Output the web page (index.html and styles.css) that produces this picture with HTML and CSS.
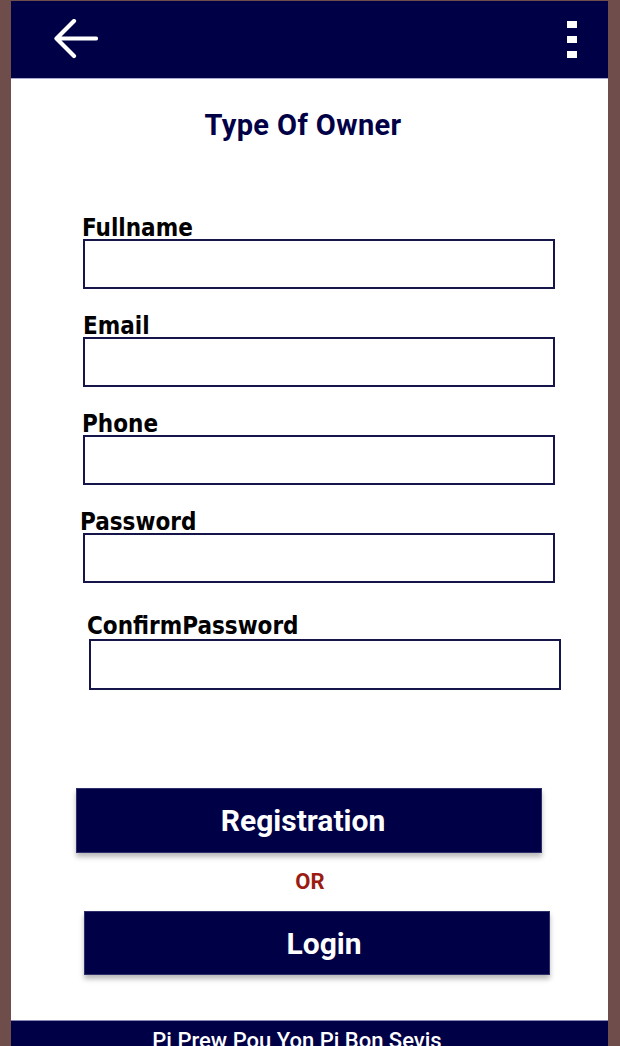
FILE: index.html
```html
<!DOCTYPE html>
<html>
<head>
<meta charset="utf-8">
<link rel="stylesheet" href="styles.css">
</head>
<body>
<div class="frame">
  <header class="topbar">
    <svg class="back" width="44" height="40" viewBox="0 0 44 40">
      <path d="M3 19.5 H42 M20 2 L2.5 19.5 L20 37" fill="none" stroke="#fff" stroke-width="4.2" stroke-linecap="round" stroke-linejoin="round"/>
    </svg>
    <div class="menu"><span></span><span></span><span></span></div>
  </header>
  <main class="content">
    <h1 class="title">Type Of Owner</h1>
    <form class="form">
      <div class="field">
        <label class="label">Fullname</label>
        <input class="input" type="text">
      </div>
      <div class="field">
        <label class="label label-email">Email</label>
        <input class="input" type="text">
      </div>
      <div class="field">
        <label class="label">Phone</label>
        <input class="input" type="text">
      </div>
      <div class="field">
        <label class="label label-pass">Password</label>
        <input class="input" type="password">
      </div>
      <div class="field field-confirm">
        <label class="label label-confirm">ConfirmPassword</label>
        <input class="input input-confirm" type="password">
      </div>
    </form>
    <div class="actions">
      <button class="btn btn-reg" type="button">Registration</button>
      <div class="or">OR</div>
      <button class="btn btn-login" type="button">Login</button>
    </div>
  </main>
  <footer class="footer">Pi Prew Pou Yon Pi Bon Sevis</footer>
</div>
</body>
</html>
```
FILE: styles.css
```css
html, body {
  margin: 0;
  padding: 0;
  background: #6e4d4b;
}
body {
  width: 620px;
  height: 1046px;
  overflow: hidden;
  font-family: Roboto, "Liberation Sans", sans-serif;
}
.frame {
  box-sizing: border-box;
  height: 1046px;
  padding: 1px 12px 0 11px;
  display: flex;
  flex-direction: column;
}
.topbar {
  height: 78px;
  flex: none;
  background: #000046;
  border-bottom: 1px solid #a8a8cc;
  box-sizing: border-box;
  display: flex;
  align-items: flex-start;
  justify-content: space-between;
  padding: 0 31px 0 43px;
}
.back {
  margin-top: 18px;
  display: block;
}
.menu {
  margin-top: 20px;
  display: flex;
  flex-direction: column;
  gap: 8px;
}
.menu span {
  display: block;
  width: 10px;
  height: 7px;
  background: #fff;
}
.content {
  flex: 1;
  background: #fff;
  display: flex;
  flex-direction: column;
}
.title {
  margin: 30px 0 0 0;
  text-align: center;
  font-size: 29px;
  letter-spacing: 0.4px;
  line-height: 32px;
  font-weight: 700;
  color: #000046;
  padding-right: 13px;
}
.form {
  margin: 77px 0 0 0;
  padding-left: 72px;
  display: flex;
  flex-direction: column;
  gap: 27px;
}
.field {
  display: flex;
  flex-direction: column;
  align-items: flex-start;
}
.label {
  font-family: "DejaVu Sans Condensed", "DejaVu Sans", sans-serif;
  font-weight: 700;
  font-size: 24px;
  line-height: 21px;
  height: 21px;
  color: #000;
  margin-left: -1px;
  white-space: nowrap;
}
.label-email { margin-left: 0; }
.label-pass { margin-left: -3px; }
.field-confirm {
  margin-top: 6px;
  padding-left: 6px;
}
.label-confirm {
  margin-left: -2px;
  margin-bottom: 2px;
}
.input {
  box-sizing: border-box;
  width: 472px;
  height: 50px;
  margin: 0;
  border: 2px solid #15154a;
  background: #fff;
  outline: none;
}
.input-confirm {
  height: 51px;
}
.actions {
  margin-top: 98px;
  display: flex;
  flex-direction: column;
  align-items: flex-start;
}
.btn {
  box-sizing: border-box;
  border: 1px solid #2e2e6a;
  background: #000046;
  color: #fff;
  font-family: Roboto, "Liberation Sans", sans-serif;
  font-weight: 700;
  font-size: 30px;
  box-shadow: 0 4px 5px rgba(0, 0, 0, 0.28);
  padding: 0;
  margin: 0;
}
.btn-reg {
  width: 466px;
  height: 65px;
  margin-left: 65px;
  padding-right: 12px;
}
.btn-login {
  width: 466px;
  height: 64px;
  margin-left: 73px;
  padding-left: 14px;
}
.or {
  align-self: stretch;
  text-align: center;
  color: #9b1c12;
  font-weight: 700;
  font-size: 22px;
  line-height: 26px;
  margin: 16px 0 16px 0;
  padding-left: 1px;
}
.footer {
  flex: none;
  height: 26px;
  box-sizing: border-box;
  background: #000046;
  border-top: 1px solid #8888b4;
  color: #fff;
  text-align: center;
  font-family: Roboto, "Liberation Sans", sans-serif;
  font-weight: 500;
  font-size: 22px;
  line-height: 26px;
  padding-top: 7px;
  padding-right: 25px;
  overflow: hidden;
  white-space: nowrap;
}
```
